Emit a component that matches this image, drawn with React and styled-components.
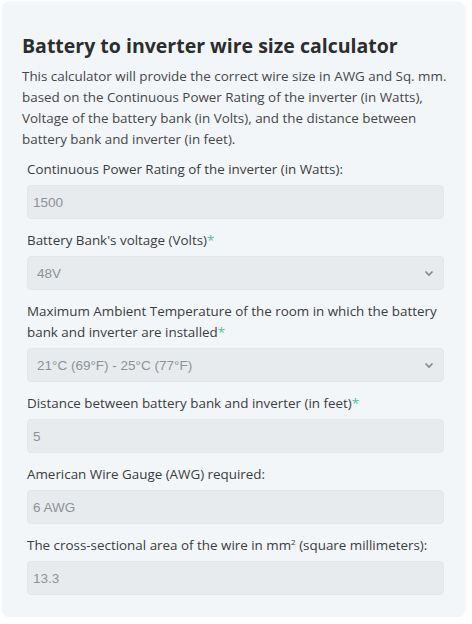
import styled, { createGlobalStyle } from "styled-components";

const GlobalStyle = createGlobalStyle`
  body {
    margin: 0;
    background: #fff;
    font-family: "Open Sans", "Noto Sans", sans-serif;
  }
`;

const Card = styled.div`
  margin: 2px 0 0 2px;
  width: 463px;
  height: 615px;
  box-sizing: border-box;
  padding: 30px 8px 0 20px;
  background: #f3f6f8;
  border-radius: 8px;
  box-shadow: 0 0 2px rgba(0, 0, 0, 0.08);
`;

const Title = styled.h2`
  margin: 0;
  font-size: 19.5px;
  line-height: 28px;
  font-weight: 700;
  color: #2b2d2f;
`;

const Intro = styled.p`
  margin: 6px 0 9px;
  font-size: 13.4px;
  line-height: 21px;
  color: #454749;
`;

const Form = styled.div`
  padding: 0 13px 0 5px;
`;

const Group = styled.div`
  margin-bottom: 11px;
`;

const Label = styled.label`
  display: block;
  margin-bottom: 5px;
  font-size: 13.4px;
  line-height: 21px;
  color: #3a3c3e;
`;

const Req = styled.span`
  color: #4fc0a3;
`;

const Field = styled.div`
  position: relative;
  height: 34px;
  box-sizing: border-box;
  display: flex;
  align-items: center;
  padding-left: ${(p) => (p.$select ? "9px" : "5px")};
  background: #e8ebee;
  border: 1px solid #e4e7ea;
  border-radius: 4px;
  font-family: "Liberation Sans", Arial, sans-serif;
  font-size: 13.5px;
  color: #8d9297;
`;

const Chevron = styled.svg`
  position: absolute;
  right: 9px;
  top: 13px;
`;

const Sup = styled.sup`
  font-size: 8px;
  line-height: 0;
`;

function Input({ value, select }) {
  return (
    <Field $select={select}>
      {value}
      {select && (
        <Chevron width="10" height="7" viewBox="0 0 10 7">
          <path d="M1.5 1.5 5 5l3.5-3.5" fill="none" stroke="#80868b" strokeWidth="1.6" />
        </Chevron>
      )}
    </Field>
  );
}

export default function App() {
  return (
    <>
      <GlobalStyle />
      <Card>
        <Title>Battery to inverter wire size calculator</Title>
        <Intro>
          This calculator will provide the correct wire size in AWG and Sq. mm.
          based on the Continuous Power Rating of the inverter (in Watts),
          Voltage of the battery bank (in Volts), and the distance between
          battery bank and inverter (in feet).
        </Intro>
        <Form>
          <Group>
            <Label>Continuous Power Rating of the inverter (in Watts):</Label>
            <Input value="1500" />
          </Group>
          <Group>
            <Label>
              Battery Bank's voltage (Volts)<Req>*</Req>
            </Label>
            <Input value="48V" select />
          </Group>
          <Group>
            <Label>
              Maximum Ambient Temperature of the room in which the battery bank
              and inverter are installed<Req>*</Req>
            </Label>
            <Input value="21°C (69°F) - 25°C (77°F)" select />
          </Group>
          <Group>
            <Label>
              Distance between battery bank and inverter (in feet)<Req>*</Req>
            </Label>
            <Input value="5" />
          </Group>
          <Group>
            <Label>American Wire Gauge (AWG) required:</Label>
            <Input value="6 AWG" />
          </Group>
          <Group>
            <Label>
              The cross-sectional area of the wire in mm<Sup>2</Sup> (square
              millimeters):
            </Label>
            <Input value="13.3" />
          </Group>
        </Form>
      </Card>
    </>
  );
}
